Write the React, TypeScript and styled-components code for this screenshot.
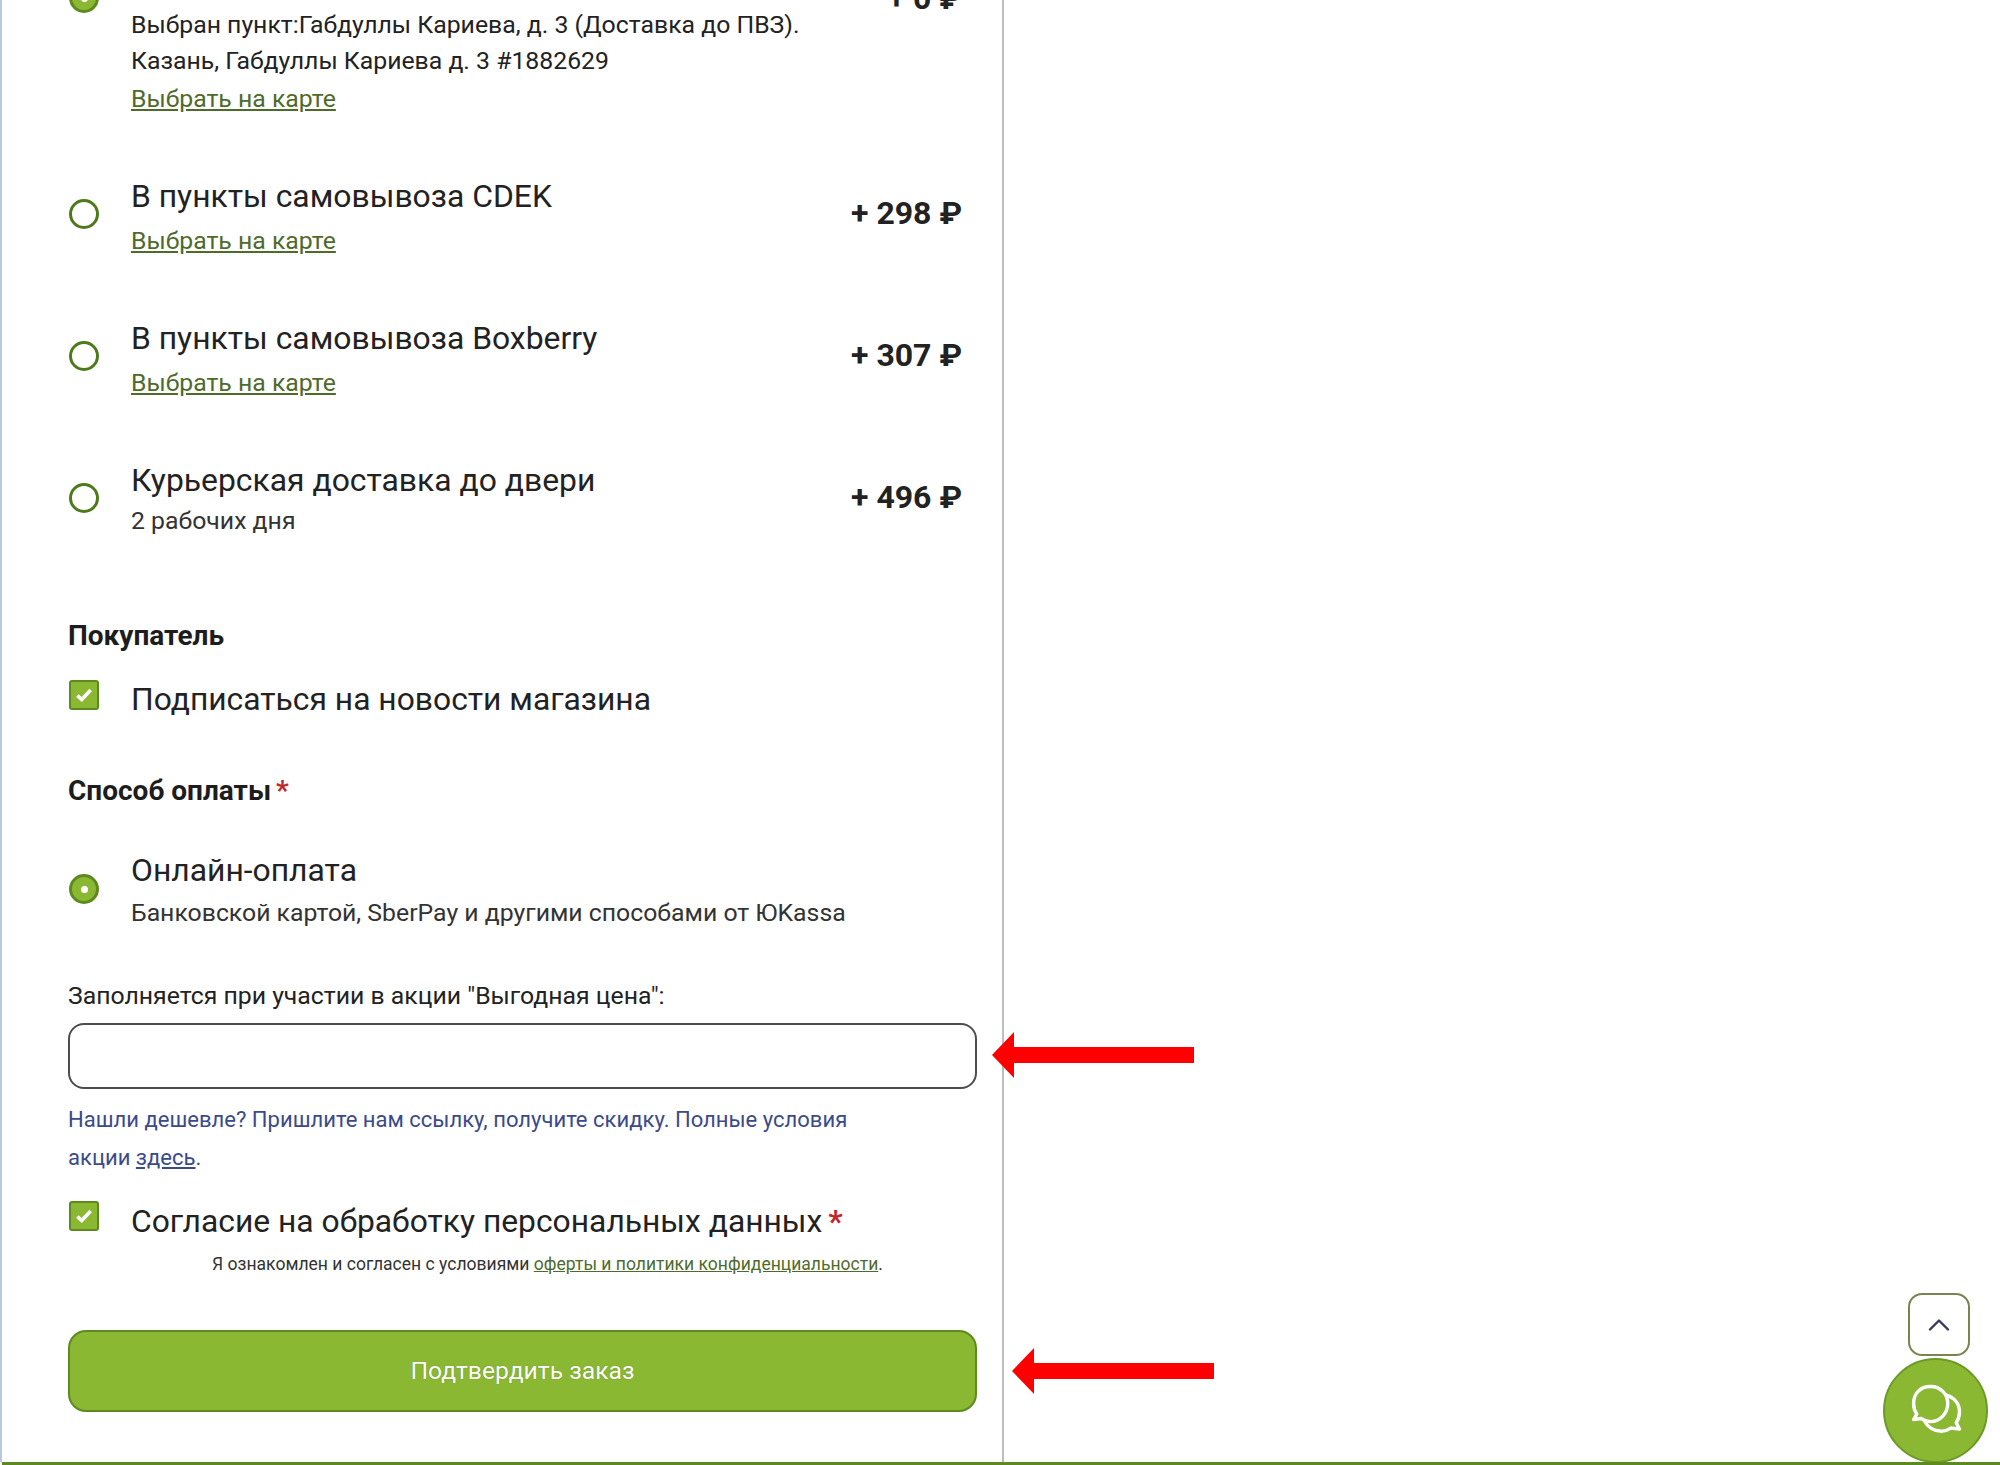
import React from "react";
import styled, { createGlobalStyle } from "styled-components";
import { ChevronUp } from "lucide-react";

const Global = createGlobalStyle`
  html, body { margin: 0; padding: 0; background: #fff; }
  body { font-family: Roboto, "Liberation Sans", sans-serif; color: #222; }
  * { box-sizing: border-box; }
`;

const Viewport = styled.div`
  position: relative;
  width: 2000px;
  height: 1465px;
  overflow: hidden;
  background: #fff;
`;
const Panel = styled.main`
  display: flow-root;
  width: 1004px;
  height: 1462px;
  padding: 0 25px 0 66px;
  border-left: 2px solid #b9c9e2;
  border-right: 2px solid #bdbdbd;
`;
const BottomLine = styled.div`
  position: absolute;
  left: 2px;
  right: 0;
  bottom: 0;
  height: 3px;
  background: #5c8a20;
  z-index: 3;
`;
const ClippedHead = styled.div`
  display: flex;
  justify-content: space-between;
  align-items: flex-start;
  height: 24px;
  margin-top: -17px;
`;
const Details = styled.div`
  padding-left: 63px;
  font-size: 24.8px;
  line-height: 36px;
  margin-bottom: 23px;
`;
const DetailLink = styled.a`
  display: block;
  line-height: 40px;
  color: #4f6b2c;
  text-decoration: underline;
`;
const Row = styled.div`
  display: flex;
  align-items: center;
  height: 142px;
`;
const RadioMark = styled.span<{ $on?: boolean; $nudge?: number }>`
  flex: none;
  display: flex;
  align-items: center;
  justify-content: center;
  width: 30px;
  height: 30px;
  margin-top: ${(p) => p.$nudge ?? 0}px;
  margin-left: 1px;
  border-radius: 50%;
  border: 3px solid ${(p) => (p.$on ? "#5d8a1f" : "#4f7a1c")};
  background: ${(p) => (p.$on ? "#8ab833" : "#fff")};
  &::after {
    content: "";
    display: ${(p) => (p.$on ? "block" : "none")};
    width: 7px;
    height: 7px;
    border-radius: 50%;
    background: #fff;
  }
`;
const Body = styled.div<{ $pullUp?: boolean }>`
  flex: 1;
  margin-left: 32px;
  margin-bottom: ${(p) => (p.$pullUp ? -6 : 0)}px;
`;
const Title = styled.div`
  font-size: 31.85px;
  line-height: 50px;
`;
const MapLink = styled.a`
  display: block;
  font-size: 24.8px;
  line-height: 40px;
  color: #4f6b2c;
  text-decoration: underline;
`;
const Sub = styled.div`
  font-size: 24.8px;
  line-height: 32px;
  padding-bottom: 2px;
  color: #333;
`;
const PaySub = styled(Sub)`
  padding: 2px 0 0;
`;
const Price = styled.div`
  flex: none;
  margin-right: 15px;
  font-size: 32px;
  font-weight: 700;
  color: #222;
`;
const ClippedPrice = styled(Price)`
  line-height: 30px;
`;
const SectionTitle = styled.h3<{ $top: number }>`
  margin: ${(p) => p.$top}px 0 0;
  font-size: 28px;
  line-height: 40px;
  font-weight: 700;
  color: #1d1d1d;
`;
const Req = styled.span`
  color: #c0272d;
  font-weight: 700;
  margin-left: -2px;
`;
const CheckRow = styled.label<{ $top: number }>`
  display: flex;
  align-items: flex-start;
  margin-top: ${(p) => p.$top}px;
  font-size: 31.8px;
  line-height: 40px;
`;
const CheckMark = styled.span<{ $top: number }>`
  flex: none;
  display: flex;
  align-items: center;
  justify-content: center;
  width: 30px;
  height: 30px;
  margin: ${(p) => p.$top}px 32px 0 1px;
  border-radius: 3px;
  border: 2px solid #5d8a1f;
  background: #8ab833;
`;
const PayRow = styled.div`
  display: flex;
  align-items: center;
  height: 84px;
  margin-top: 34px;
`;
const FieldLabel = styled.div`
  margin-top: 49px;
  font-size: 24.8px;
  line-height: 36px;
`;
const TextInput = styled.input`
  display: block;
  width: 100%;
  height: 66px;
  margin-top: 9px;
  border: 2px solid #4d4d4d;
  border-radius: 16px;
  background: #fff;
  outline: none;
`;
const Note = styled.p`
  width: 800px;
  margin: 12px 0 0;
  font-size: 22.04px;
  line-height: 38px;
  color: #3c4a8a;
`;
const NoteLink = styled.a`
  color: #3c4a8a;
  text-decoration: underline;
`;
const Legal = styled.p`
  margin: 11px 0 0;
  padding-left: 50px;
  text-align: center;
  font-size: 17.55px;
  line-height: 24px;
  color: #333;
`;
const LegalLink = styled.a`
  color: #4f6b2c;
  text-decoration: underline;
`;
const Submit = styled.button`
  display: block;
  width: 100%;
  height: 82px;
  margin-top: 54px;
  padding: 0 0 2px;
  border: 2px solid #5d8a1f;
  border-radius: 18px;
  background: #8ab833;
  color: #fff;
  font: 400 24.7px Roboto, sans-serif;
  text-shadow: 0 0 1px rgba(60, 90, 20, 0.6);
`;
const Arrow = styled.svg<{ $x: number; $y: number }>`
  position: absolute;
  left: ${(p) => p.$x}px;
  top: ${(p) => p.$y}px;
  width: 202px;
  height: 46px;
  z-index: 2;
`;
const ScrollTop = styled.button`
  position: absolute;
  left: 1908px;
  top: 1293px;
  display: flex;
  align-items: center;
  justify-content: center;
  width: 62px;
  height: 63px;
  padding: 0;
  border: 2px solid #7b8350;
  border-radius: 14px;
  background: #fff;
  color: #3a3a5a;
`;
const Chat = styled.button`
  position: absolute;
  left: 1883px;
  top: 1358px;
  display: flex;
  align-items: center;
  justify-content: center;
  width: 105px;
  height: 105px;
  padding: 0;
  border: 2px solid #6c9a26;
  border-radius: 50%;
  background: #8ab833;
`;

const Check = () => (
  <svg width="20" height="18" viewBox="0 0 18 16" fill="none">
    <path d="M3 8.5 L7 12 L15 3.5" stroke="#fff" strokeWidth="3.2" />
  </svg>
);

const DeliveryRow = ({ title, price, children, pullUp }: { title: string; price: string; children: React.ReactNode; pullUp?: boolean }) => (
  <Row>
    <RadioMark $nudge={2} />
    <Body $pullUp={pullUp}>
      <Title>{title}</Title>
      {children}
    </Body>
    <Price>{price}</Price>
  </Row>
);

export default function App() {
  return (
    <Viewport>
      <Global />
      <Panel>
        <ClippedHead>
          <RadioMark $on />
          <ClippedPrice>+ 0 ₽</ClippedPrice>
        </ClippedHead>
        <Details>
          <div>Выбран пункт:Габдуллы Кариева, д. 3 (Доставка до ПВЗ).</div>
          <div>Казань, Габдуллы Кариева д. 3 #1882629</div>
          <DetailLink>Выбрать на карте</DetailLink>
        </Details>
        <DeliveryRow title="В пункты самовывоза CDEK" price="+ 298 ₽" pullUp>
          <MapLink>Выбрать на карте</MapLink>
        </DeliveryRow>
        <DeliveryRow title="В пункты самовывоза Boxberry" price="+ 307 ₽" pullUp>
          <MapLink>Выбрать на карте</MapLink>
        </DeliveryRow>
        <DeliveryRow title="Курьерская доставка до двери" price="+ 496 ₽">
          <Sub>2 рабочих дня</Sub>
        </DeliveryRow>

        <SectionTitle $top={48}>Покупатель</SectionTitle>
        <CheckRow $top={23}>
          <CheckMark $top={1}><Check /></CheckMark>
          Подписаться на новости магазина
        </CheckRow>

        <SectionTitle $top={52}>Способ оплаты <Req>*</Req></SectionTitle>
        <PayRow>
          <RadioMark $on $nudge={4} />
          <Body>
            <Title>Онлайн-оплата</Title>
            <PaySub>Банковской картой, SberPay и другими способами от ЮKassa</PaySub>
          </Body>
        </PayRow>

        <FieldLabel>Заполняется при участии в акции "Выгодная цена":</FieldLabel>
        <TextInput />
        <Note>
          Нашли дешевле? Пришлите нам ссылку, получите скидку. Полные условия акции <NoteLink>здесь</NoteLink>.
        </Note>
        <CheckRow $top={24}>
          <CheckMark $top={0}><Check /></CheckMark>
          <span>Согласие на обработку персональных данных <Req>*</Req></span>
        </CheckRow>
        <Legal>
          Я ознакомлен и согласен с условиями <LegalLink>оферты и политики конфиденциальности</LegalLink>.
        </Legal>
        <Submit>Подтвердить заказ</Submit>
      </Panel>

      <Arrow $x={992} $y={1032} viewBox="0 0 202 46">
        <path d="M0 23 L22 0 V15 H202 V31 H22 V46 Z" fill="#ff0000" />
      </Arrow>
      <Arrow $x={1012} $y={1348} viewBox="0 0 202 46">
        <path d="M0 23 L22 0 V15 H202 V31 H22 V46 Z" fill="#ff0000" />
      </Arrow>

      <ScrollTop><ChevronUp size={36} strokeWidth={1.6} /></ScrollTop>
      <Chat>
        <svg width="64" height="64" viewBox="0 0 60 60" fill="none" stroke="#fff" strokeWidth="3.2" strokeLinejoin="round">
          <path d="M25 7 C15 7 9 14 9 23 C9 27 10 30 12 33 L9 38 L16 37 C19 39 22 40 25 40 C34 40 41 32 41 23 C41 14 34 7 25 7 Z" />
          <path d="M39 15 C47 17 52 23 52 31 C52 35 51 38 49 41 L52 47 L44 46 C41 48 38 49 35 49 C28 49 22 45 19 39" />
        </svg>
      </Chat>
      <BottomLine />
    </Viewport>
  );
}
